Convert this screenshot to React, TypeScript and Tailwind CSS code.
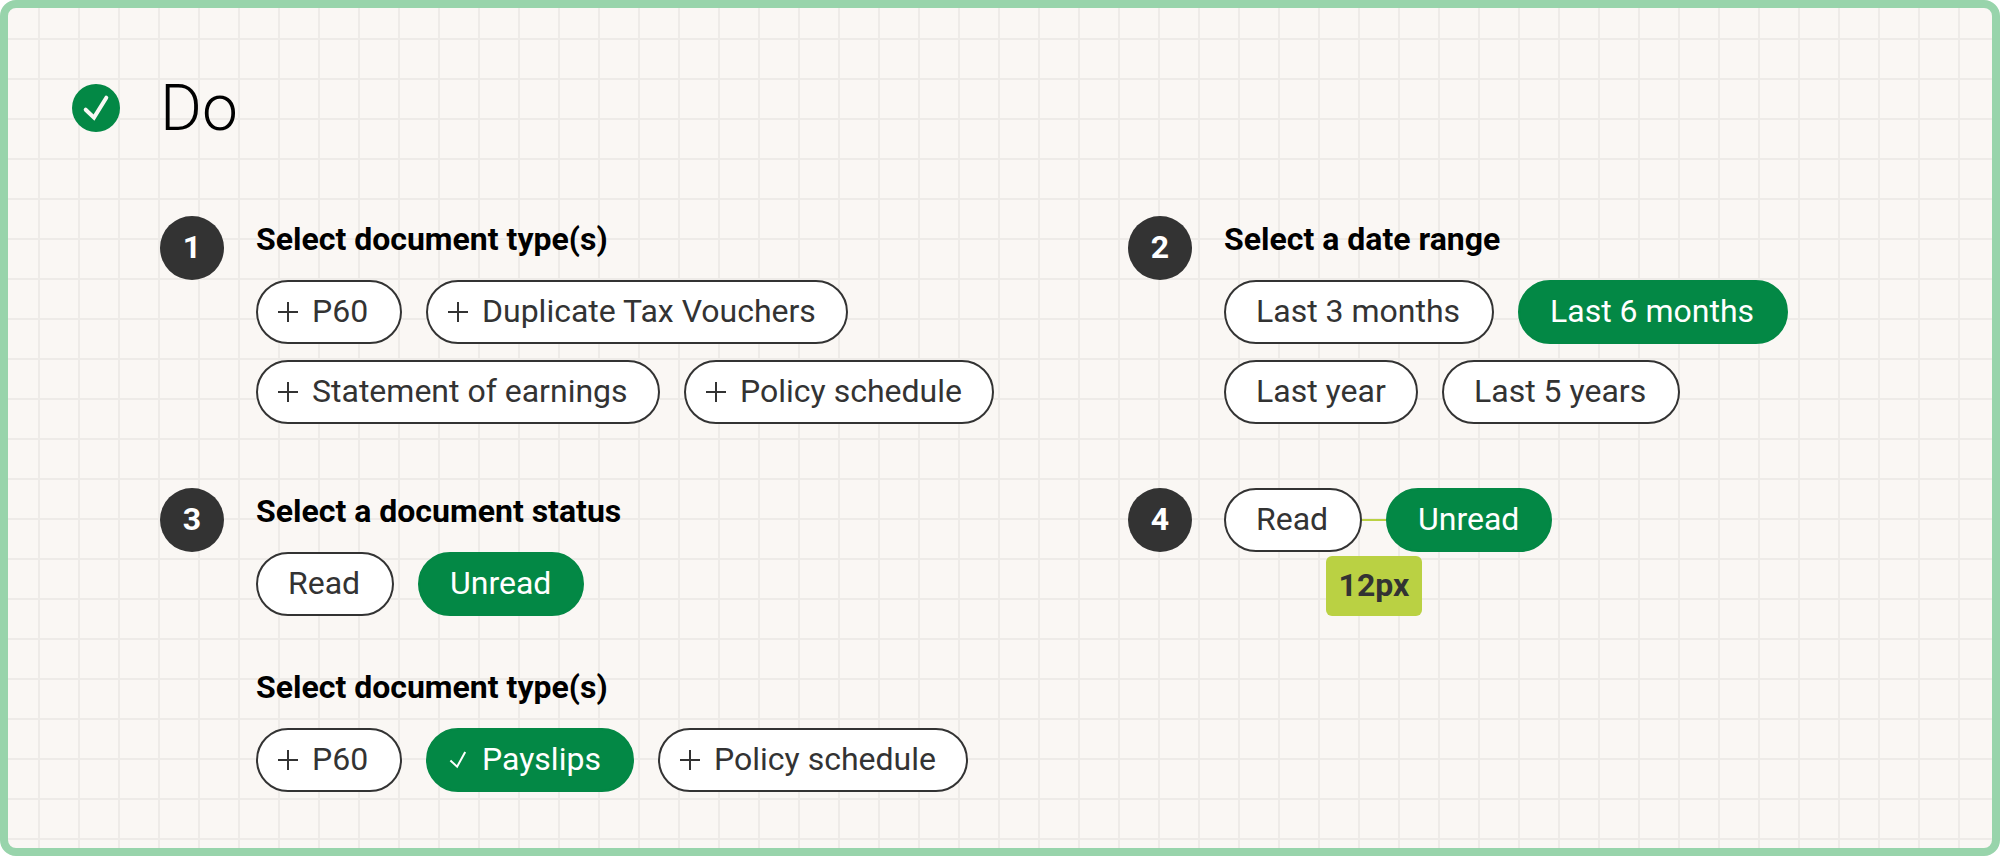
import type { ReactNode } from 'react';

type IconName = 'plus' | 'check';

function ChipIcon({ name }: { name: IconName }) {
  return (
    <svg className="mr-3 size-6 shrink-0" viewBox="0 0 24 24" fill="none" stroke="currentColor" strokeWidth="2">
      {name === 'plus' ? (
        <path d="M2 12H22M12 2V22" />
      ) : (
        <path d="M4.4 12.4L11.1 18.7L19.2 4" />
      )}
    </svg>
  );
}

type ChipProps = { label: string; width: string; icon?: IconName; selected?: boolean };

function Chip({ label, width, icon, selected }: ChipProps) {
  return (
    <button
      type="button"
      className={`flex h-16 shrink-0 items-center rounded-full border-2 text-[32px] leading-[48px] whitespace-nowrap ${width} ${
        icon ? 'pl-[18px]' : 'pl-[30px]'
      } ${selected ? 'border-[#038845] bg-[#038845] text-white' : 'border-[#333333] bg-white text-[#333333]'}`}
    >
      {icon && <ChipIcon name={icon} />}
      <span className="pb-0.5">{label}</span>
    </button>
  );
}

function Group({ title, children }: { title: string; children: ReactNode }) {
  return (
    <div className="flex flex-col gap-4">
      <h2 className="pb-0.5 text-[32px] leading-[46px] font-bold text-black">{title}</h2>
      {children}
    </div>
  );
}

function Row({ children }: { children: ReactNode }) {
  return <div className="flex gap-6">{children}</div>;
}

function Step({ number, children }: { number: number; children: ReactNode }) {
  return (
    <section className="flex items-start gap-8">
      <div className="flex size-16 shrink-0 items-center justify-center rounded-full bg-[#333333] pb-0.5 text-[32px] leading-[48px] font-bold text-white">
        {number}
      </div>
      <div className="flex flex-col gap-12">{children}</div>
    </section>
  );
}

export default function App() {
  return (
    <div className="h-[856px] w-[2000px] bg-white font-['Roboto',sans-serif]">
      <main className="h-full w-full rounded-2xl border-8 border-[#98d4ab] bg-[#faf7f4] bg-[linear-gradient(to_right,transparent_38px,#eeebe8_38px),linear-gradient(to_bottom,transparent_38px,#eeebe8_38px)] bg-[length:40px_40px] bg-[position:-8px_-8px] pt-[60px] pl-16">
        <header className="flex h-20 items-center gap-10">
          <svg className="size-12" viewBox="0 0 48 48" fill="none">
            <circle cx="24" cy="24" r="24" fill="#038845" />
            <path d="M13.7 25.7L22 33.6L34.3 13.7" stroke="#faf7f4" strokeWidth="4" strokeLinecap="round" />
          </svg>
          <h1 className="pt-0.5 text-[64px] leading-[80px] font-light text-black">Do</h1>
        </header>
        <div className="mt-17 ml-22 grid grid-cols-[968px_1fr] gap-y-16">
          <Step number={1}>
            <Group title="Select document type(s)">
              <Row>
                <Chip icon="plus" label="P60" width="w-[146px]" />
                <Chip icon="plus" label="Duplicate Tax Vouchers" width="w-[422px]" />
              </Row>
              <Row>
                <Chip icon="plus" label="Statement of earnings" width="w-[404px]" />
                <Chip icon="plus" label="Policy schedule" width="w-[310px]" />
              </Row>
            </Group>
          </Step>
          <Step number={2}>
            <Group title="Select a date range">
              <Row>
                <Chip label="Last 3 months" width="w-[270px]" />
                <Chip label="Last 6 months" width="w-[270px]" selected />
              </Row>
              <Row>
                <Chip label="Last year" width="w-[194px]" />
                <Chip label="Last 5 years" width="w-[238px]" />
              </Row>
            </Group>
          </Step>
          <Step number={3}>
            <Group title="Select a document status">
              <Row>
                <Chip label="Read" width="w-[138px]" />
                <Chip label="Unread" width="w-[166px]" selected />
              </Row>
            </Group>
            <Group title="Select document type(s)">
              <Row>
                <Chip icon="plus" label="P60" width="w-[146px]" />
                <Chip icon="check" label="Payslips" width="w-[208px]" selected />
                <Chip icon="plus" label="Policy schedule" width="w-[310px]" />
              </Row>
            </Group>
          </Step>
          <Step number={4}>
            <div className="flex items-center">
              <Chip label="Read" width="w-[138px]" />
              <div className="relative h-0.5 w-6 bg-[#bad143]">
                <div className="absolute top-[37px] left-1/2 flex h-15 w-24 -translate-x-1/2 items-center justify-center rounded-md bg-[#bad143] pb-0.5 text-[32px] leading-[48px] font-bold text-[#333333]">
                  12px
                </div>
              </div>
              <Chip label="Unread" width="w-[166px]" selected />
            </div>
          </Step>
        </div>
      </main>
    </div>
  );
}
